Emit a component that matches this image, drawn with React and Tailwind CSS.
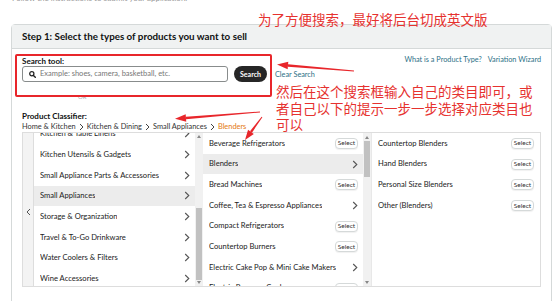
import React from 'react';

const col1 = [
  { t: 'Kitchen & Table Linens', kind: 'more' },
  { t: 'Kitchen Utensils & Gadgets', kind: 'more' },
  { t: 'Small Appliance Parts & Accessories', kind: 'more' },
  { t: 'Small Appliances', kind: 'more', active: true },
  { t: 'Storage & Organization', kind: 'more' },
  { t: 'Travel & To-Go Drinkware', kind: 'more' },
  { t: 'Water Coolers & Filters', kind: 'more' },
  { t: 'Wine Accessories', kind: 'more' },
];

const col2 = [
  { t: 'Beverage Refrigerators', kind: 'select' },
  { t: 'Blenders', kind: 'more', active: true },
  { t: 'Bread Machines', kind: 'select' },
  { t: 'Coffee, Tea & Espresso Appliances', kind: 'more' },
  { t: 'Compact Refrigerators', kind: 'select' },
  { t: 'Countertop Burners', kind: 'select' },
  { t: 'Electric Cake Pop & Mini Cake Makers', kind: 'more' },
  { t: 'Electric Pressure Cookers', kind: 'select' },
];

const col3 = [
  { t: 'Countertop Blenders', kind: 'select' },
  { t: 'Hand Blenders', kind: 'select' },
  { t: 'Personal Size Blenders', kind: 'select' },
  { t: 'Other (Blenders)', kind: 'select' },
];

function Chevron() {
  return (
    <svg width="6" height="9" viewBox="0 0 6 9" fill="none">
      <path d="M1.2 1l3.6 3.5L1.2 8" stroke="#555" strokeWidth="1.1" />
    </svg>
  );
}

function Crumb() {
  return (
    <svg width="5" height="8" viewBox="0 0 5 8" fill="none" className="mx-[3px]">
      <path d="M1 1l3 3-3 3" stroke="#444" strokeWidth="1" />
    </svg>
  );
}

function Row({ item, pr }) {
  return (
    <div
      className={`flex h-[20.7px] shrink-0 items-center justify-between pl-[6px] ${pr} ${
        item.active ? 'bg-[#ececec]' : 'bg-white'
      }`}
    >
      <span className="truncate text-[7.6px] text-[#222]">{item.t}</span>
      {item.kind === 'select' ? (
        <span className="flex h-[11px] w-[23px] shrink-0 items-center justify-center rounded-[4px] border border-[#d5d9d9] bg-white text-[6.5px] text-[#333] shadow-[0_1px_1px_rgba(0,0,0,0.06)]">
          Select
        </span>
      ) : (
        <Chevron />
      )}
    </div>
  );
}

function Scrollbar({ gap, thumb }) {
  return (
    <div className="flex w-[8px] shrink-0 flex-col bg-[#f1f1f1]">
      <div className="flex h-[8px] items-center justify-center">
        <div className="h-0 w-0 border-x-[2.5px] border-b-[3px] border-x-transparent border-b-[#888]" />
      </div>
      <div className="flex flex-1 flex-col px-[1px]">
        <div style={{ height: gap }} />
        <div className="bg-[#c1c1c1]" style={{ height: thumb }} />
      </div>
      <div className="flex h-[8px] items-center justify-center">
        <div className="h-0 w-0 border-x-[2.5px] border-t-[3px] border-x-transparent border-t-[#888]" />
      </div>
    </div>
  );
}

function arrow(tail, tip, head, half, w0, w1) {
  const dx = tip[0] - tail[0];
  const dy = tip[1] - tail[1];
  const len = Math.hypot(dx, dy);
  const ux = dx / len;
  const uy = dy / len;
  const px = -uy;
  const py = ux;
  const bx = tip[0] - ux * head;
  const by = tip[1] - uy * head;
  const shaft = [
    [tail[0] + px * w0, tail[1] + py * w0],
    [bx + px * w1, by + py * w1],
    [bx - px * w1, by - py * w1],
    [tail[0] - px * w0, tail[1] - py * w0],
  ];
  const tri = [tip, [bx + px * half, by + py * half], [bx - px * half, by - py * half]];
  return [shaft, tri].map((pts) => pts.map((p) => p.join(',')).join(' '));
}

export default function App() {
  const arrows = [
    arrow([354, 71], [277, 64.5], 11, 3.8, 0.5, 1.3),
    arrow([260, 112], [175, 118.8], 11, 3.8, 0.5, 1.3),
    arrow([262, 117], [245, 140], 10, 3.6, 0.5, 1.2),
  ];

  return (
    <div className="relative h-[301px] w-[554px] overflow-hidden bg-white font-['Lato',sans-serif] text-[#0f1111]">
      <div className="h-[3px] overflow-hidden pl-[12px]">
        <p className="-mt-[7px] text-[8px] leading-[10px] text-[#999]">
          Follow the instructions to submit your application.
        </p>
      </div>

      <div className="ml-[11px] mt-[21px] w-[541px] rounded-t-[4px] border border-[#d5d9d9]">
        <div className="flex h-[24px] items-center border-b border-[#d5d9d9] bg-[#f0f2f2] pl-[10px]">
          <h1 className="text-[9.8px] font-bold text-[#0f1111]">
            Step 1: Select the types of products you want to sell
          </h1>
        </div>

        <div className="pl-[10px] pr-[10px]">
          <div className="mt-[6px] flex h-[11px] items-center justify-between">
            <span className="text-[8px] font-bold">Search tool:</span>
            <div className="flex gap-[6px] text-[7.3px] text-[#2b7086]">
              <span>What is a Product Type?</span>
              <span>Variation Wizard</span>
            </div>
          </div>

          <div className="flex h-[16px] items-center">
            <div className="flex h-[16px] w-[206px] items-center gap-[4px] rounded-[3px] border border-[#888c8c] pl-[6px]">
              <svg width="7" height="7" viewBox="0 0 10 10" fill="none">
                <circle cx="4" cy="4" r="3" stroke="#222" strokeWidth="1.8" />
                <path d="M6.3 6.3L9 9" stroke="#222" strokeWidth="2" strokeLinecap="round" />
              </svg>
              <span className="text-[7.5px] text-[#767676]">
                Example: shoes, camera, basketball, etc.
              </span>
            </div>
            <div className="ml-[6px] flex h-[16px] w-[33px] items-center justify-center rounded-full bg-[#262626] text-[7px] font-bold text-white">
              Search
            </div>
            <span className="ml-[8px] mt-[2px] text-[7.3px] text-[#2b7086]">Clear Search</span>
          </div>

          <div className="mt-[9px] flex h-[10px] items-center pl-[56px] text-[6px] text-[#aaa]">OR</div>

          <div className="mt-[10px] flex h-[10px] items-center text-[8px] font-bold">Product Classifier:</div>
          <div className="flex h-[11px] items-center text-[7.4px] text-[#333]">
            <span>Home &amp; Kitchen</span>
            <Crumb />
            <span>Kitchen &amp; Dining</span>
            <Crumb />
            <span>Small Appliances</span>
            <Crumb />
            <span className="text-[#e47911]">Blenders</span>
          </div>

          <div className="flex h-[155px] border border-[#dddddd]">
            <div className="flex w-[11px] shrink-0 items-center justify-center border-r border-[#dddddd] bg-[#f3f3f3] pt-[4px]">
              <svg width="5" height="8" viewBox="0 0 5 8" fill="none">
                <path d="M4 1L1 4l3 3" stroke="#555" strokeWidth="1" />
              </svg>
            </div>

            <div className="flex w-[169px] shrink-0 overflow-hidden">
              <div className="flex flex-1 flex-col overflow-hidden">
                <div className="-mt-[9.5px] flex flex-col">
                  {col1.map((it) => (
                    <Row key={it.t} item={it} pr="pr-[5px]" />
                  ))}
                </div>
              </div>
              <Scrollbar gap={68} thumb={72} />
            </div>

            <div className="flex w-[169px] shrink-0 overflow-hidden border-r border-[#e8e8e8]">
              <div className="flex flex-1 flex-col overflow-hidden">
                {col2.map((it) => (
                  <Row key={it.t} item={it} pr="pr-[5px]" />
                ))}
              </div>
              <Scrollbar gap={0} thumb={36} />
            </div>

            <div className="flex flex-1 flex-col overflow-hidden">
              {col3.map((it) => (
                <Row key={it.t} item={it} pr="pr-[6px]" />
              ))}
            </div>
          </div>
          <div className="h-[20px]" />
        </div>
      </div>

      {/* annotations drawn over the screenshot */}
      <div className="pointer-events-none absolute left-[15px] top-[54px] h-[43px] w-[257px] rounded-[2px] border-2 border-[#e8262b]" />
      <p className="pointer-events-none absolute left-[258px] top-[10.5px] whitespace-nowrap font-['Noto_Sans_CJK_SC',sans-serif] text-[13.5px] leading-[16px] text-[#e6322f]">
        为了方便搜索，最好将后台切成英文版
      </p>
      <p className="pointer-events-none absolute left-[276px] top-[83px] whitespace-nowrap font-['Noto_Sans_CJK_SC',sans-serif] text-[13.5px] leading-[16.7px] text-[#e6322f]">
        然后在这个搜索框输入自己的类目即可，或
        <br />
        者自己以下的提示一步一步选择对应类目也
        <br />
        可以
      </p>
      <svg className="pointer-events-none absolute left-0 top-0" width="554" height="301">
        {arrows.map(([shaft, tri], i) => (
          <g key={i} fill="#e8262b">
            <polygon points={shaft} />
            <polygon points={tri} />
          </g>
        ))}
      </svg>
    </div>
  );
}
